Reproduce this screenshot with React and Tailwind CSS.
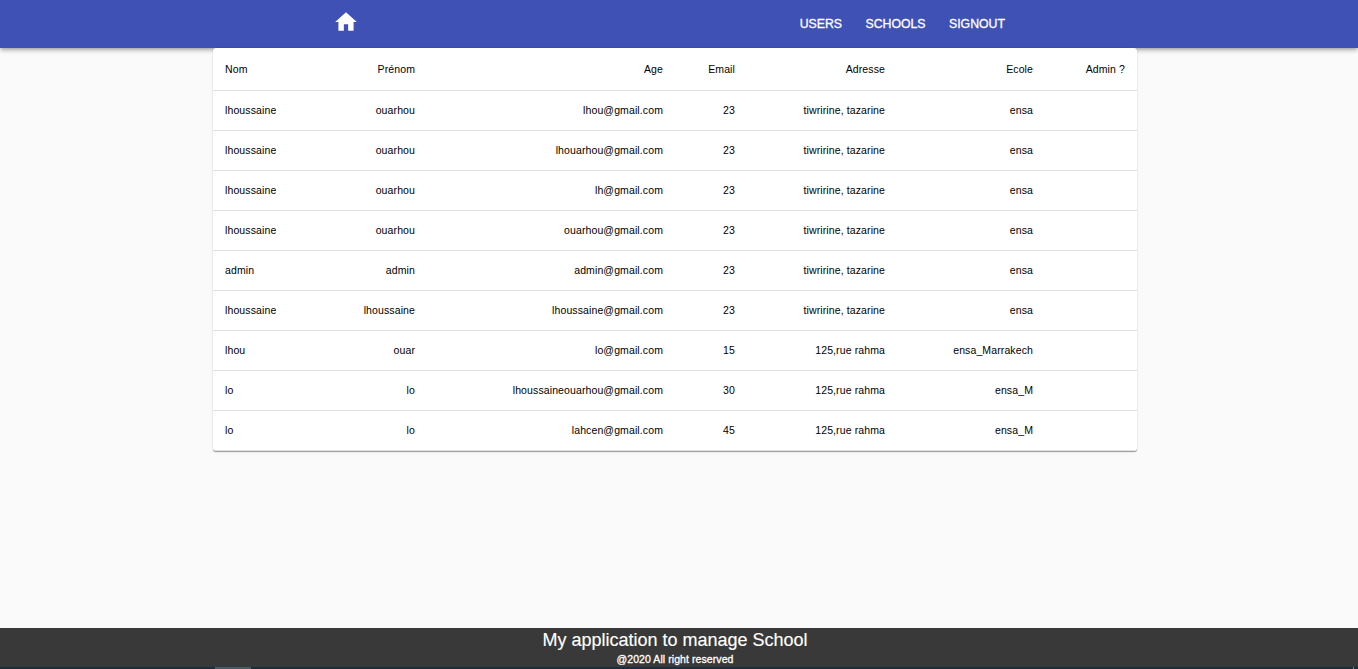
const columns = ["Nom", "Prénom", "Age", "Email", "Adresse", "Ecole", "Admin ?"];

const users = [
  ["lhoussaine", "ouarhou", "lhou@gmail.com", "23", "tiwririne, tazarine", "ensa", ""],
  ["lhoussaine", "ouarhou", "lhouarhou@gmail.com", "23", "tiwririne, tazarine", "ensa", ""],
  ["lhoussaine", "ouarhou", "lh@gmail.com", "23", "tiwririne, tazarine", "ensa", ""],
  ["lhoussaine", "ouarhou", "ouarhou@gmail.com", "23", "tiwririne, tazarine", "ensa", ""],
  ["admin", "admin", "admin@gmail.com", "23", "tiwririne, tazarine", "ensa", ""],
  ["lhoussaine", "lhoussaine", "lhoussaine@gmail.com", "23", "tiwririne, tazarine", "ensa", ""],
  ["lhou", "ouar", "lo@gmail.com", "15", "125,rue rahma", "ensa_Marrakech", ""],
  ["lo", "lo", "lhoussaineouarhou@gmail.com", "30", "125,rue rahma", "ensa_M", ""],
  ["lo", "lo", "lahcen@gmail.com", "45", "125,rue rahma", "ensa_M", ""],
];

function NavBar() {
  return (
    <header className="h-12 shrink-0 bg-[#3f51b5] text-white shadow-[0_1.5px_3px_-0.75px_rgba(0,0,0,0.2),0_3px_3.75px_rgba(0,0,0,0.14),0_0.75px_7.5px_rgba(0,0,0,0.12)]">
      <div className="mx-auto flex h-full w-[692px] items-center justify-between pr-5">
        <a href="#home" aria-label="Home" className="-mt-1">
          <svg viewBox="0 0 24 24" className="size-[26px]" fill="currentColor">
            <path d="M10 20v-6h4v6h5v-8h3L12 3 2 12h3v8z" />
          </svg>
        </a>
        <nav className="flex gap-[23.4px] text-[12.3px] leading-[18px] [-webkit-text-stroke:0.3px_white]">
          <a href="#users">USERS</a>
          <a href="#schools">SCHOOLS</a>
          <a href="#signout">SIGNOUT</a>
        </nav>
      </div>
    </header>
  );
}

function UsersTable() {
  return (
    <div className="ml-[213px] w-[924px] overflow-hidden rounded-[3px] bg-white shadow-[0_1.5px_0.75px_-0.75px_rgba(0,0,0,0.2),0_0.75px_0.75px_rgba(0,0,0,0.14),0_0.75px_2.25px_rgba(0,0,0,0.12)]">
      <table className="w-full table-fixed border-separate border-spacing-0 text-right text-[10.5px] leading-[15px] tracking-[0.1125px] text-black">
        <colgroup>
          <col className="w-[124px]" />
          <col className="w-[90px]" />
          <col className="w-[248px]" />
          <col className="w-[72px]" />
          <col className="w-[150px]" />
          <col className="w-[148px]" />
          <col className="w-[92px]" />
        </colgroup>
        <thead>
          <tr className="h-[43px]">
            {columns.map((name) => (
              <th key={name} className="border-b border-[#e0e0e0] px-3 font-normal first:text-left">{name}</th>
            ))}
          </tr>
        </thead>
        <tbody>
          {users.map((row, r) => (
            <tr key={r} className="h-10">
              {row.map((cell, c) => (
                <td key={c} className="border-b border-[#e0e0e0] px-3 whitespace-nowrap first:text-left">{cell}</td>
              ))}
            </tr>
          ))}
        </tbody>
      </table>
    </div>
  );
}

function Footer() {
  return (
    <footer className="mt-auto shrink-0">
      <div className="flex h-[39px] flex-col items-center bg-[#393939] pr-2 text-white">
        <p className="text-[18px] leading-6 [-webkit-text-stroke:0.15px_white]">My application to manage School</p>
        <p className="text-[10.5px] leading-[15px] tracking-[0.075px] [-webkit-text-stroke:0.3px_white]">@2020 All right reserved</p>
      </div>
      <div className="flex h-[2px] bg-[#1f2c3d]">
        <div className="ml-[215px] w-9 bg-[#4c5a66]" />
        <div className="mr-[4px] ml-auto w-px bg-[#7d8496]" />
      </div>
    </footer>
  );
}

export default function App() {
  return (
    <div className="flex h-screen flex-col overflow-hidden bg-[#fafafa] font-['Liberation_Sans',Arial,sans-serif]">
      <NavBar />
      <main className="relative">
        <UsersTable />
      </main>
      <Footer />
    </div>
  );
}
